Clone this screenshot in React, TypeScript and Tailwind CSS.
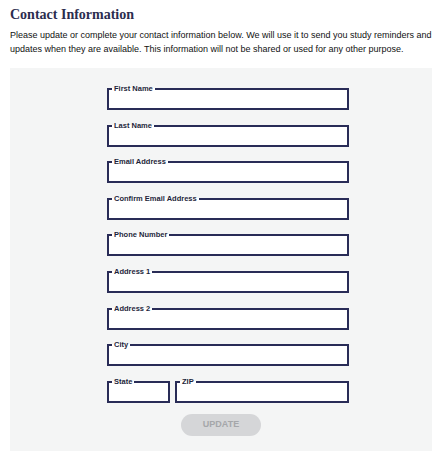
import * as React from 'react';

const fields = [
  'First Name',
  'Last Name',
  'Email Address',
  'Confirm Email Address',
  'Phone Number',
  'Address 1',
  'Address 2',
  'City',
];

function Field({ label, className }: { label: string; className?: string }) {
  return (
    <fieldset className={'border-2 border-[#292c57] bg-white ' + (className ?? '')}>
      <legend className="ml-[3px] px-[2px] text-[7.5px] leading-[10px] font-bold text-[#1d1f3a]">{label}</legend>
      <input className="block w-full h-[14px] px-1 text-[9px] outline-none bg-transparent" />
    </fieldset>
  );
}

export default function App() {
  return (
    <div className="w-[442px] h-[455px] bg-white px-[10px] pt-[5px] font-['Liberation_Sans',sans-serif]">
      <h1 className="font-['Liberation_Serif',serif] font-bold text-[14px] leading-[20px] text-[#2b2d4f]">Contact Information</h1>
      <p className="mt-[3px] text-[9px] leading-[14px] text-[#111]">
        Please update or complete your contact information below. We will use it to send you study reminders and updates when they are available. This information will not be shared or used for any other purpose.
      </p>
      <div className="mt-[12px] bg-[#f4f5f5] pt-[16px] pb-[15px]">
        <div className="ml-[97px] w-[242px] flex flex-col gap-[10.6px]">
          {fields.map((f) => (
            <Field key={f} label={f} />
          ))}
          <div className="flex gap-[5px]">
            <Field label="State" className="w-[63px]" />
            <Field label="ZIP" className="flex-1" />
          </div>
        </div>
        <button className="block mx-auto mt-[11px] w-[80px] h-[22px] rounded-full bg-[#d5d6d8] text-[#a5a7aa] text-[9px] font-bold">
          UPDATE
        </button>
      </div>
    </div>
  );
}
